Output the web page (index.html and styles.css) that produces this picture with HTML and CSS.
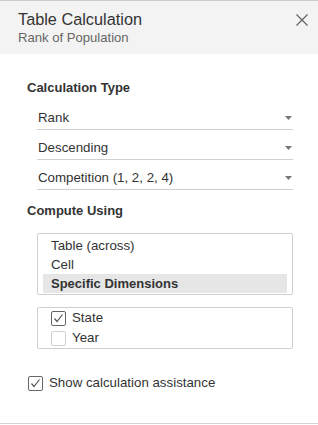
FILE: index.html
```html
<!DOCTYPE html>
<html lang="en">
<head>
  <meta charset="UTF-8" />
  <meta name="viewport" content="width=device-width, initial-scale=1.0"/>
  <title>Table Calculation</title>
  <link rel="stylesheet" href="styles.css">
</head>
<body>
  <div class="panel">
    <div class="header">
      <div class="titles">
        <div class="title">Table Calculation</div>
        <div class="subtitle">Rank of Population</div>
      </div>
      <button class="close" aria-label="Close">
        <svg width="12" height="12" viewBox="0 0 12 12">
          <path d="M0.5 0.5 L11.5 11.5 M11.5 0.5 L0.5 11.5" stroke="#666" stroke-width="1.3" fill="none"/>
        </svg>
      </button>
    </div>

    <div class="content">
      <div class="section-title">Calculation Type</div>
      <div class="select">
        <span>Rank</span>
        <svg class="arrow" width="7" height="4" viewBox="0 0 7 4"><polygon points="0,0 7,0 3.5,4" fill="#777"/></svg>
      </div>
      <div class="select">
        <span>Descending</span>
        <svg class="arrow" width="7" height="4" viewBox="0 0 7 4"><polygon points="0,0 7,0 3.5,4" fill="#777"/></svg>
      </div>
      <div class="select">
        <span>Competition (1, 2, 2, 4)</span>
        <svg class="arrow" width="7" height="4" viewBox="0 0 7 4"><polygon points="0,0 7,0 3.5,4" fill="#777"/></svg>
      </div>

      <div class="section-title compute">Compute Using</div>
      <div class="listbox">
        <div class="list-item">Table (across)</div>
        <div class="list-item">Cell</div>
        <div class="list-item selected">Specific Dimensions</div>
      </div>

      <div class="checklist">
        <div class="check-row">
          <span class="box checked">
            <svg width="13" height="13" viewBox="0 0 13 13"><polyline points="2.5,6.5 5,9.5 10.5,2.5" stroke="#555" stroke-width="1.2" fill="none"/></svg>
          </span>
          State
        </div>
        <div class="check-row">
          <span class="box"></span>
          Year
        </div>
      </div>

      <div class="check-row assist">
        <span class="box checked">
          <svg width="13" height="13" viewBox="0 0 13 13"><polyline points="2.5,6.5 5,9.5 10.5,2.5" stroke="#555" stroke-width="1.2" fill="none"/></svg>
        </span>
        Show calculation assistance
      </div>
    </div>
  </div>
</body>
</html>
```

FILE: styles.css
```css
body {
  margin: 0;
  font-family: "Liberation Sans", Arial, sans-serif;
  background-color: white;
  color: #333;
}

.panel {
  width: 318px;
  height: 424px;
  box-sizing: border-box;
  border-top: 1px solid #cbcbcb;
  border-bottom: 1px solid #d4d4d4;
}

.header {
  display: flex;
  justify-content: space-between;
  align-items: flex-start;
  height: 53px;
  box-sizing: border-box;
  padding: 8px 10px 8px 18px;
  background-color: #f3f3f3;
}

.title {
  font-size: 16.3px;
  line-height: 21px;
  color: #333;
}

.subtitle {
  font-size: 13.1px;
  line-height: 16px;
  color: #666;
}

.close {
  margin-top: 5px;
  padding: 0;
  border: none;
  background: none;
  width: 12px;
  height: 12px;
  cursor: pointer;
}

.close svg {
  display: block;
}

.content {
  padding: 26px 0 0 27px;
}

.section-title {
  font-size: 13px;
  line-height: 16px;
  font-weight: bold;
  color: #333;
  margin-bottom: 4px;
}

.section-title.compute {
  margin-top: 13px;
  margin-bottom: 14px;
}

.select {
  display: flex;
  justify-content: space-between;
  align-items: center;
  width: 256px;
  margin-left: 10px;
  box-sizing: border-box;
  padding: 10px 1px 3px 1px;
  font-size: 13.3px;
  line-height: 16px;
  border-bottom: 1px solid #cfcfcf;
}

.arrow {
  display: block;
}

.listbox {
  width: 256px;
  margin-left: 10px;
  box-sizing: border-box;
  padding: 2px 5px 1px;
  border: 1px solid #cfcfcf;
  border-radius: 2px;
}

.list-item {
  font-size: 13.3px;
  line-height: 19px;
  padding-left: 8px;
  color: #333;
}

.list-item.selected {
  background-color: #e6e6e6;
  font-weight: bold;
  font-size: 13px;
}

.checklist {
  width: 256px;
  margin: 12px 0 0 10px;
  box-sizing: border-box;
  padding: 0 0 0 13px;
  border: 1px solid #cfcfcf;
  border-radius: 2px;
}

.check-row {
  display: flex;
  align-items: center;
  gap: 6px;
  font-size: 13.3px;
  line-height: 20px;
  color: #333;
}

.check-row.assist {
  margin: 24px 0 0 1px;
}

.box {
  width: 15px;
  height: 15px;
  box-sizing: border-box;
  border: 1px solid #d0d0d0;
  border-radius: 2px;
  background: white;
}

.box.checked {
  border-color: #666;
}

.box svg {
  display: block;
}
```
